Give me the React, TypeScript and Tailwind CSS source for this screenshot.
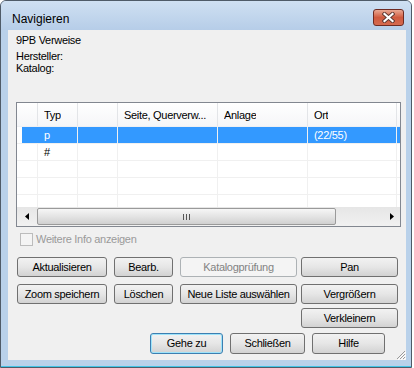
import clsx from 'clsx'

const cols = [
    { w: 'w-[21px]', label: '' },
    { w: 'w-[40px]', label: 'Typ' },
    { w: 'w-[40px]', label: '' },
    { w: 'w-[100px]', label: 'Seite, Querverw...' },
    { w: 'w-[90px]', label: 'Anlage' },
    { w: 'w-[89px]', label: 'Ort' },
]

const rows = [
    { cells: ['', 'p', '', '', '', '(22/55)'], selected: true },
    { cells: ['', '#', '', '', '', ''], selected: false },
    { cells: ['', '', '', '', '', ''], selected: false },
    { cells: ['', '', '', '', '', ''], selected: false },
    { cells: ['', '', '', '', '', ''], selected: false },
]

function Btn({ label, w, h = 'h-[20px]', disabled, isDefault }: { label: string; w: string; h?: string; disabled?: boolean; isDefault?: boolean }) {
    return (
        <div
            className={clsx(
                'flex shrink-0 items-center justify-center rounded-[3px] border text-[11px] tracking-[-0.3px]',
                w,
                h,
                disabled
                    ? 'border-[#adb2b5] bg-[#f4f4f4] text-[#838383]'
                    : 'bg-gradient-to-b from-[#f2f2f2] via-[#e6e6e6] to-[#d2d2d2] text-black',
                !disabled && (isDefault ? 'border-[#3c7fb1] shadow-[inset_0_0_0_1px_#9ee3fa]' : 'border-[#707070]'),
            )}
        >
            {label}
        </div>
    )
}

function Arrow({ dir }: { dir: 'l' | 'r' }) {
    return (
        <svg width="4" height="7" viewBox="0 0 4 7">
            {dir === 'l' ? <path d="M4 0 L0 3.5 L4 7 Z" fill="#000" /> : <path d="M0 0 L4 3.5 L0 7 Z" fill="#000" />}
        </svg>
    )
}

export default function App() {
    return (
        <div className="h-[368px] w-[414px] bg-white font-['Liberation_Sans',Arial,sans-serif] text-black">
            <div className="flex h-[368px] w-[412px] flex-col rounded-t-[6px] border border-[#4f5b68] bg-[#b9d1ea]">
                {/* title bar */}
                <div className="flex h-[29px] shrink-0 items-start justify-between rounded-t-[5px] bg-gradient-to-b from-[#cfe0f2] to-[#b6cde8] pl-[11px] pr-[7px]">
                    <span className="mt-[10px] text-[12px] leading-[16px]">Navigieren</span>
                    <div className="mt-[8px] flex h-[17px] w-[31px] items-center justify-center rounded-[3px] border border-[#6e2b22] bg-gradient-to-b from-[#e9a893] via-[#cf5a3f] to-[#d56a4f]">
                        <svg width="13" height="11" viewBox="0 0 13 11">
                            <path d="M2.5 2 L10.5 9 M10.5 2 L2.5 9" stroke="#5d3832" strokeWidth="4" strokeLinecap="square" />
                            <path d="M2.5 2 L10.5 9 M10.5 2 L2.5 9" stroke="#fff" strokeWidth="2.2" strokeLinecap="square" />
                        </svg>
                    </div>
                </div>

                {/* client area */}
                <div className="ml-[7px] flex h-[330px] w-[398px] shrink-0 flex-col bg-[#f0f0f0] text-[11px] tracking-[-0.3px]">
                    <div className="ml-[8px] mt-[4px] leading-[13px]">9PB Verweise</div>
                    <div className="ml-[8px] mt-[3px] leading-[12px]">Hersteller:</div>
                    <div className="ml-[8px] leading-[12px]">Katalog:</div>

                    {/* list view */}
                    <div className="ml-[8px] mt-[28px] flex h-[125px] w-[385px] flex-col border border-[#828790] bg-white">
                        <div className="flex h-[24px] shrink-0 border-b border-[#eef0f3] bg-gradient-to-b from-white to-[#f5f6f8]">
                            {cols.map((c, i) => (
                                <div key={i} className={clsx('flex h-full shrink-0 items-center border-r border-[#e3e5e8] pl-[6px] pt-[2px]', c.w)}>
                                    <span className="truncate">{c.label}</span>
                                </div>
                            ))}
                        </div>
                        <div className="h-[80px] shrink-0 overflow-hidden">
                            {rows.map((r, ri) => (
                                <div key={ri} className="flex h-[17px] border-b border-[#f0f0f0]">
                                    {r.cells.map((t, ci) => (
                                        <div
                                            key={ci}
                                            className={clsx(
                                                'flex h-full shrink-0 items-center border-r border-[#f0f0f0]',
                                                cols[ci].w,
                                                ci === 0 ? 'pl-[5px]' : 'pl-[6px]',
                                                r.selected && ci > 0 && 'bg-[#3399ff] text-white',
                                            )}
                                        >
                                            {ci === 0 && r.selected ? <div className="-mr-px h-full flex-1 bg-[#3399ff]" /> : t}
                                        </div>
                                    ))}
                                    <div className={clsx('h-full flex-1', r.selected && 'bg-[#3399ff]')} />
                                </div>
                            ))}
                        </div>
                        {/* horizontal scrollbar */}
                        <div className="flex h-[19px] shrink-0 items-center bg-gradient-to-b from-[#e6e6e6] to-[#f1f1f1]">
                            <div className="flex w-[20px] shrink-0 items-center justify-center">
                                <Arrow dir="l" />
                            </div>
                            <div className="flex h-[17px] w-[299px] shrink-0 items-center justify-center rounded-[2px] border border-[#9a9a9a] bg-gradient-to-b from-[#f6f6f6] via-[#e4e4e4] to-[#d0d0d0]">
                                <svg width="7" height="6" viewBox="0 0 7 6">
                                    <path d="M0.5 0 V6 M3.5 0 V6 M6.5 0 V6" stroke="#555" strokeWidth="1" />
                                </svg>
                            </div>
                            <div className="flex flex-1 items-center justify-end pr-[6px]">
                                <Arrow dir="r" />
                            </div>
                        </div>
                    </div>

                    {/* checkbox */}
                    <div className="ml-[12px] mt-[5px] flex h-[15px] items-center gap-[3px] text-[#9a9a9a]">
                        <div className="h-[13px] w-[13px] border border-[#bcbcbc] bg-[#f4f4f4]" />
                        <span>Weitere Info anzeigen</span>
                    </div>

                    {/* buttons */}
                    <div className="ml-[9px] mt-[10px] flex">
                        <Btn label="Aktualisieren" w="w-[90px]" />
                        <div className="ml-[7px]"><Btn label="Bearb." w="w-[59px]" /></div>
                        <div className="ml-[7px]"><Btn label="Katalogprüfung" w="w-[117px]" disabled /></div>
                        <div className="ml-[4px]"><Btn label="Pan" w="w-[97px]" /></div>
                    </div>
                    <div className="ml-[9px] mt-[7px] flex">
                        <Btn label="Zoom speichern" w="w-[90px]" />
                        <div className="ml-[7px]"><Btn label="Löschen" w="w-[59px]" /></div>
                        <div className="ml-[7px]"><Btn label="Neue Liste auswählen" w="w-[117px]" /></div>
                        <div className="ml-[4px]"><Btn label="Vergrößern" w="w-[97px]" /></div>
                    </div>
                    <div className="mt-[4px] flex justify-end pr-[8px]">
                        <Btn label="Verkleinern" w="w-[97px]" />
                    </div>
                    <div className="mt-[5px] flex h-[28px] items-start">
                        <div className="ml-[142px]"><Btn label="Gehe zu" w="w-[73px]" h="h-[21px]" isDefault /></div>
                        <div className="ml-[7px]"><Btn label="Schließen" w="w-[75px]" h="h-[21px]" /></div>
                        <div className="ml-[7px]"><Btn label="Hilfe" w="w-[73px]" h="h-[21px]" /></div>
                        <svg className="ml-auto self-end" width="12" height="12" viewBox="0 0 12 12">
                            <path d="M11 3 L3 11 M11 6 L6 11 M11 9 L9 11" stroke="#9a9a9a" strokeWidth="1" />
                            <path d="M12 4 L4 12 M12 7 L7 12 M12 10 L10 12" stroke="#ffffff" strokeWidth="1" />
                        </svg>
                    </div>
                </div>

                {/* bottom frame */}
                <div className="h-[6px] shrink-0" />
                <div className="h-[1px] shrink-0 bg-[#43c3e6]" />
            </div>
        </div>
    )
}
